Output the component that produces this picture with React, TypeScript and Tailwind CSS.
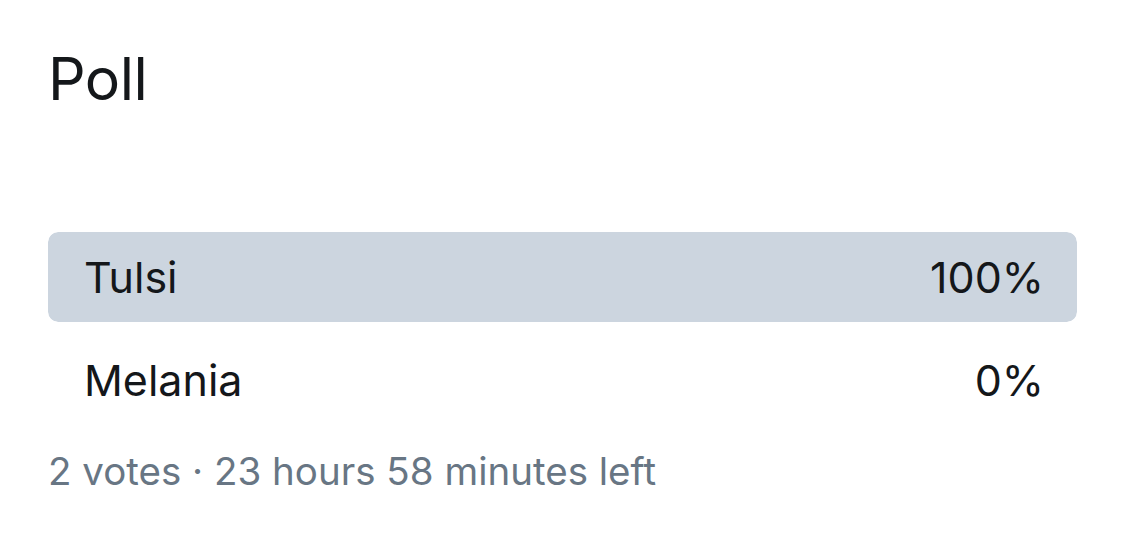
import React from "react";

const options = [
  { label: "Tulsi", pct: 100, winner: true },
  { label: "Melania", pct: 0, winner: false },
];

export default function App() {
  return (
    <div className="w-[1125px] h-[539px] bg-white px-[48px] font-['Inter',sans-serif] text-[#14171a]">
      <h1 className="pt-[43px] text-[59px] leading-[72px] font-normal tracking-[-0.5px]">Poll</h1>
      <div className="mt-[117px] flex flex-col gap-[13px]">
        {options.map((o) => (
          <div key={o.label} className="relative h-[90px] rounded-[10px] overflow-hidden">
            {o.winner && (
              <div className="absolute inset-y-0 left-0 bg-[#ccd5df] rounded-[10px]" style={{ width: `${o.pct}%` }} />
            )}
            <div className="relative flex h-full items-center justify-between pl-[36px] pr-[33px] text-[43px]">
              <span>{o.label}</span>
              <span>{o.pct}%</span>
            </div>
          </div>
        ))}
      </div>
      <p className="mt-[23px] text-[38.5px] leading-[46px] text-[#687684]">2 votes · 23 hours 58 minutes left</p>
    </div>
  );
}
